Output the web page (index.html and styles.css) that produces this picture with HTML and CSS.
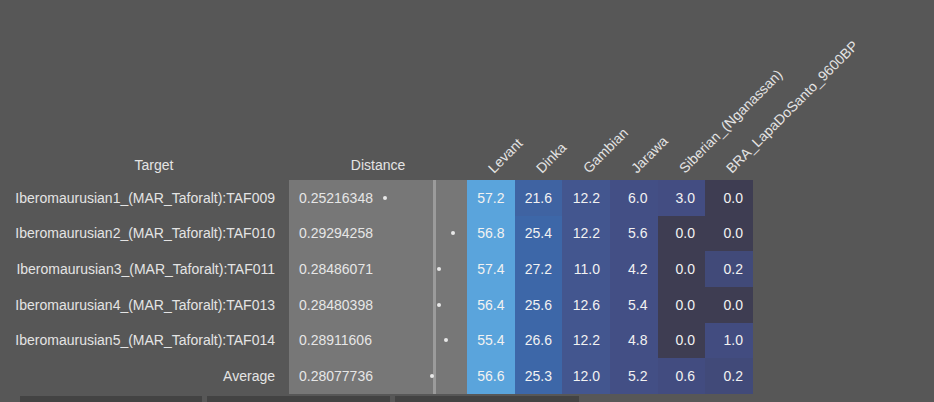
FILE: index.html
```html
<!DOCTYPE html>
<html>
<head>
<meta charset="utf-8">
<link rel="stylesheet" href="styles.css">
</head>
<body>
<div class="page">
  <div class="table">
    <div class="h h-target"><span>Target</span></div>
    <div class="h h-dist"><span>Distance</span></div>
    <div class="h h-rot"><span>Levant</span></div>
    <div class="h h-rot"><span>Dinka</span></div>
    <div class="h h-rot"><span>Gambian</span></div>
    <div class="h h-rot"><span>Jarawa</span></div>
    <div class="h h-rot"><span>Siberian_(Nganassan)</span></div>
    <div class="h h-rot"><span>BRA_LapaDoSanto_9600BP</span></div>

    <div class="tg">Iberomaurusian1_(MAR_Taforalt):TAF009</div>
    <div class="ds">0.25216348<i class="dot" style="left:94px"></i></div>
    <div class="c v-hi">57.2</div><div class="c v-d2">21.6</div><div class="c v-g">12.2</div><div class="c v-j">6.0</div><div class="c v-s3">3.0</div><div class="c v-0">0.0</div>

    <div class="tg">Iberomaurusian2_(MAR_Taforalt):TAF010</div>
    <div class="ds">0.29294258<i class="dot" style="left:162px"></i></div>
    <div class="c v-hi">56.8</div><div class="c v-d">25.4</div><div class="c v-g">12.2</div><div class="c v-j">5.6</div><div class="c v-0">0.0</div><div class="c v-0">0.0</div>

    <div class="tg">Iberomaurusian3_(MAR_Taforalt):TAF011</div>
    <div class="ds">0.28486071<i class="dot" style="left:148px"></i></div>
    <div class="c v-hi">57.4</div><div class="c v-d">27.2</div><div class="c v-g">11.0</div><div class="c v-j">4.2</div><div class="c v-0">0.0</div><div class="c v-02">0.2</div>

    <div class="tg">Iberomaurusian4_(MAR_Taforalt):TAF013</div>
    <div class="ds">0.28480398<i class="dot" style="left:148px"></i></div>
    <div class="c v-hi">56.4</div><div class="c v-d">25.6</div><div class="c v-g">12.6</div><div class="c v-j">5.4</div><div class="c v-0">0.0</div><div class="c v-0">0.0</div>

    <div class="tg">Iberomaurusian5_(MAR_Taforalt):TAF014</div>
    <div class="ds">0.28911606<i class="dot" style="left:155px"></i></div>
    <div class="c v-hi">55.4</div><div class="c v-d">26.6</div><div class="c v-g">12.2</div><div class="c v-j">4.8</div><div class="c v-0">0.0</div><div class="c v-lo">1.0</div>

    <div class="tg">Average</div>
    <div class="ds">0.28077736<i class="dot" style="left:141px"></i></div>
    <div class="c v-hi">56.6</div><div class="c v-d">25.3</div><div class="c v-g">12.0</div><div class="c v-j">5.2</div><div class="c v-lo">0.6</div><div class="c v-02">0.2</div>
  </div>
  <div class="bars">
    <div class="bar b1"></div>
    <div class="bar b2"></div>
    <div class="bar b3"></div>
  </div>
</div>
</body>
</html>
```
FILE: styles.css
```css
html, body {
  margin: 0;
  padding: 0;
  background: #575757;
}
body {
  font-family: "Liberation Sans", Arial, sans-serif;
  font-size: 14px;
  color: #e4e4e4;
  width: 934px;
  height: 402px;
  overflow: hidden;
}
.page {
  display: flex;
  flex-direction: column;
}
.table {
  display: grid;
  grid-template-columns: 289px 178px 47.5px 47.5px 48px 47.5px 47.5px 48px;
  grid-template-rows: 180px;
  grid-auto-rows: 35.67px;
}
.h {
  display: flex;
  align-items: flex-end;
  line-height: 16px;
}
.h-target {
  justify-content: center;
  padding-left: 19px;
  padding-bottom: 7px;
}
.h-dist {
  justify-content: center;
  padding-bottom: 7px;
}
.h-rot {
  padding-left: 29px;
  padding-bottom: 4px;
}
.h-rot span {
  display: block;
  white-space: nowrap;
  transform-origin: 0 100%;
  transform: rotate(-45deg);
}
.tg {
  display: flex;
  align-items: center;
  justify-content: flex-end;
  padding-right: 14px;
  white-space: nowrap;
}
.ds {
  position: relative;
  display: flex;
  align-items: center;
  padding-left: 10px;
  background: #777777;
  color: #e6e6e6;
}
.ds::after {
  content: "";
  position: absolute;
  left: 144px;
  top: 0;
  bottom: 0;
  width: 3px;
  background: #9b9b9b;
}
.dot {
  position: absolute;
  top: 50%;
  width: 4px;
  height: 4px;
  margin-top: -2px;
  border-radius: 50%;
  background: #e8e8e8;
  z-index: 1;
}
.c {
  display: flex;
  align-items: center;
  justify-content: flex-end;
  padding-right: 10px;
  color: #f2f2f2;
}
.v-hi { background: #5aa4dc; }
.v-d2 { background: #3f63a2; }
.v-d  { background: #3d67a8; }
.v-g  { background: #43568f; }
.v-j  { background: #434f85; }
.v-s3 { background: #434d82; }
.v-lo { background: #424c80; }
.v-02 { background: #414a79; }
.v-0  { background: #3e3d52; }
.bars {
  display: flex;
  gap: 5px;
  padding-left: 20px;
  margin-top: 2px;
}
.bar {
  height: 6px;
  background: #434343;
}
.b1 { width: 182px; }
.b2 { width: 183px; }
.b3 { width: 184px; }
```
